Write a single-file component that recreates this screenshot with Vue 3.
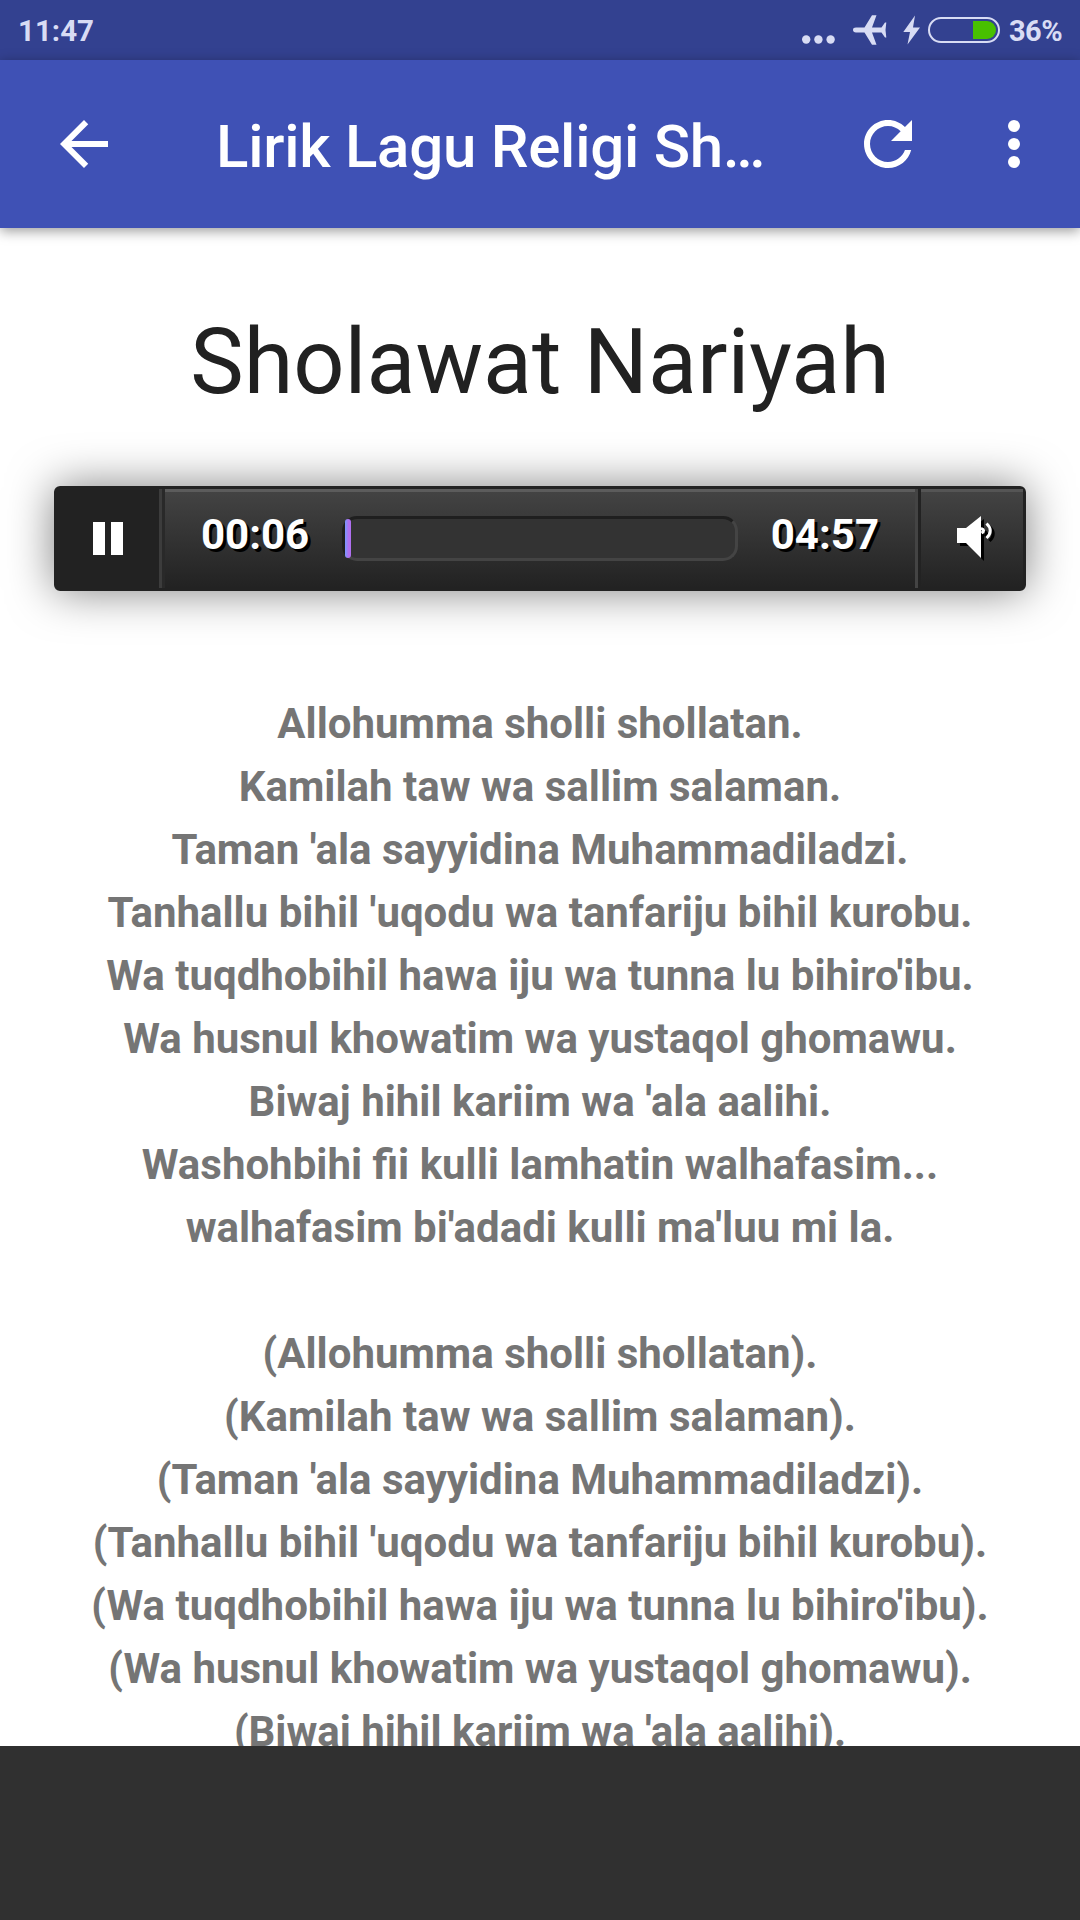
<template>
  <div class="screen">
    <header class="status-bar">
      <span class="clock">11:47</span>
      <div class="status-icons">
        <svg class="dots" width="33" height="9" viewBox="0 0 33 9">
          <circle cx="4.2" cy="4.5" r="4.2" />
          <circle cx="16.4" cy="4.5" r="4.2" />
          <circle cx="28.6" cy="4.5" r="4.2" />
        </svg>
        <svg class="plane" width="34" height="30" viewBox="0 0 34 30">
          <path d="M0 15c0-1.600 1.200-2.400 3-2.400h8.500L19 .3h4.500l-4.500 12.300h9.500L32 7.500h1.300L32.500 15l.8 7.500H32l-3.500-5.100H19l4.500 12.300H19l-7.500-12.300H3c-1.800 0-3-.8-3-2.400z" />
        </svg>
        <svg class="bolt" width="18" height="30" viewBox="0 0 18 30">
          <path d="M12 .5L.3 17H7L4.500 29.500 17 12.500h-7z" />
        </svg>
        <div class="battery">
          <div class="battery-level" :style="{ width: battery + '%' }"></div>
        </div>
        <span class="percent">{{ battery }}%</span>
      </div>
    </header>

    <nav class="toolbar">
      <svg class="icon" viewBox="0 0 24 24">
        <path d="M20 11H7.830l5.590-5.590L12 4l-8 8 8 8 1.410-1.410L7.830 13H20v-2z" />
      </svg>
      <h1 class="toolbar-title">Lirik Lagu Religi Sh…</h1>
      <svg class="icon refresh" viewBox="0 0 24 24">
        <path d="M17.650 6.350C16.200 4.900 14.210 4 12 4c-4.420 0-7.990 3.580-7.990 8s3.570 8 7.990 8c3.730 0 6.840-2.550 7.730-6h-2.080c-.82 2.330-3.040 4-5.650 4-3.310 0-6-2.690-6-6s2.690-6 6-6c1.660 0 3.140.69 4.220 1.780L13 11h7V4l-2.350 2.350z" />
      </svg>
      <svg class="icon more" viewBox="0 0 24 24">
        <circle cx="12" cy="6" r="2" />
        <circle cx="12" cy="12" r="2" />
        <circle cx="12" cy="18" r="2" />
      </svg>
    </nav>

    <main class="content">
      <h2 class="song-title">Sholawat Nariyah</h2>

      <div class="player">
        <div class="player-play">
          <svg width="30" height="33" viewBox="0 0 30 33">
            <path d="M0 0h12v33H0zM18 0h12v33H18z" />
          </svg>
        </div>
        <div class="player-scrubber">
          <span class="time">{{ formatTime(current) }}</span>
          <div class="track">
            <div class="track-fill" :style="{ width: progress + '%' }"></div>
          </div>
          <span class="time">{{ formatTime(duration) }}</span>
        </div>
        <div class="player-volume">
          <svg width="39" height="42" viewBox="0 0 39 42">
            <path d="M0 12h9L24 0v42L9 27H0z" />
            <path class="wave" d="M24 12.500q5 2 .5 4.500M29.500 7.500q7.500 7 0 14.500" />
          </svg>
        </div>
      </div>

      <div class="lyrics">
        <p v-for="(verse, i) in verses" :key="i">
          <span v-for="line in verse" :key="line">{{ line }}</span>
        </p>
      </div>
    </main>

    <footer class="ad-slot"></footer>
  </div>
</template>

<script setup>
import { computed, ref } from 'vue'

const battery = ref(36)
const current = ref(6)
const duration = ref(297)

const progress = computed(() => (current.value / duration.value) * 76.2)

const lines = [
  'Allohumma sholli shollatan.',
  'Kamilah taw wa sallim salaman.',
  "Taman 'ala sayyidina Muhammadiladzi.",
  "Tanhallu bihil 'uqodu wa tanfariju bihil kurobu.",
  "Wa tuqdhobihil hawa iju wa tunna lu bihiro'ibu.",
  'Wa husnul khowatim wa yustaqol ghomawu.',
  "Biwaj hihil kariim wa 'ala aalihi.",
  'Washohbihi fii kulli lamhatin walhafasim...',
  "walhafasim bi'adadi kulli ma'luu mi la."
]

// The second verse repeats the first one in parentheses
const verses = [
  lines,
  lines.slice(0, 7).map(line => '(' + line.slice(0, -1) + ').')
]

function formatTime(seconds) {
  const m = String(Math.floor(seconds / 60)).padStart(2, '0')
  const s = String(seconds % 60).padStart(2, '0')
  return m + ':' + s
}
</script>

<style>
body {
  margin: 0;
  background: #ffffff;
}
</style>

<style scoped>
.screen {
  display: flex;
  flex-direction: column;
  width: 1080px;
  height: 1920px;
  overflow: hidden;
  font-family: Roboto, sans-serif;
  background: #ffffff;
}

.status-bar {
  display: flex;
  align-items: center;
  justify-content: space-between;
  flex: none;
  height: 60px;
  box-sizing: border-box;
  padding: 0 18px;
  background: #334190;
  color: #d8dcf4;
  font-size: 29.5px;
  font-weight: 700;
}

.clock {
  padding-top: 2px;
}

.status-icons {
  display: flex;
  align-items: center;
}

.status-icons svg {
  fill: #d8dcf4;
}

.dots {
  margin: 18px 18px 0 0;
}

.plane {
  margin-right: 16px;
}

.bolt {
  margin-right: 7px;
}

.battery {
  display: flex;
  justify-content: flex-end;
  width: 72px;
  height: 26px;
  box-sizing: border-box;
  padding: 2px;
  border: 2px solid #d8dcf4;
  border-radius: 13px;
  margin-right: 9px;
}

.battery-level {
  background: #48c000;
  border-radius: 0 9px 9px 0;
}

.percent {
  padding-top: 2px;
  font-size: 29px;
  letter-spacing: -0.6px;
}

.toolbar {
  display: flex;
  align-items: center;
  flex: none;
  height: 168px;
  box-sizing: border-box;
  padding: 0 30px 0 48px;
  background: #3f51b5;
  box-shadow: 0 3px 12px rgba(0, 0, 0, 0.4);
  z-index: 1;
}

.icon {
  flex: none;
  width: 72px;
  height: 72px;
  fill: #ffffff;
}

.toolbar-title {
  flex: 1;
  margin: 6px 0 0 96px;
  color: #ffffff;
  font-size: 60px;
  font-weight: 500;
  line-height: 72px;
  letter-spacing: -0.25px;
  white-space: nowrap;
}

.more {
  margin-left: 54px;
}

.content {
  flex: 1;
  min-height: 0;
  overflow: hidden;
  text-align: center;
}

.song-title {
  margin: 75px 0 0;
  color: #212121;
  font-size: 90px;
  font-weight: 400;
  line-height: 120px;
}

.player {
  display: flex;
  height: 105px;
  box-sizing: border-box;
  margin: 63px 54px 0;
  border: 3px solid #222222;
  border-radius: 6px;
  background: linear-gradient(#444444, #222222);
  box-shadow: 0 0 45px rgba(0, 0, 0, 0.5);
}

.player-play {
  display: flex;
  align-items: center;
  justify-content: center;
  width: 102px;
  background: #222222;
}

.player-play svg,
.player-volume svg {
  fill: #ffffff;
}

.player-scrubber {
  display: flex;
  flex: 1;
  align-items: center;
  justify-content: space-between;
  padding: 0 36px 0 39px;
  border-left: 3px solid #3c3c3c;
  border-right: 3px solid #444444;
  box-shadow: inset 3px 0 0 #292929, inset 0 3px 0 #5c5c5c;
}

.time {
  margin-top: -8px;
  color: #ffffff;
  font-size: 42px;
  font-weight: 700;
  text-shadow: 3px 3px 0 #000000;
}

.track {
  width: 396px;
  height: 45px;
  box-sizing: border-box;
  border: 3px solid;
  border-color: #1f1f1f #444444 #444444 #1f1f1f;
  border-radius: 15px;
  background: #333333;
}

.track-fill {
  height: 39px;
  border-radius: 3px;
  background: linear-gradient(to right, #7898ff, #b070f0 60%);
}

.player-volume {
  display: flex;
  align-items: center;
  justify-content: center;
  width: 105px;
  box-sizing: border-box;
  padding: 0 0 3px 12px;
  box-shadow: inset 3px 0 0 #222222, inset 0 3px 0 #555555;
}

.player-volume svg {
  filter: drop-shadow(3px 3px 0 #000000);
}

.player-volume .wave {
  fill: none;
  stroke: #ffffff;
  stroke-width: 3;
}

.lyrics {
  margin-top: 101px;
  color: #757575;
  font-size: 42px;
  font-weight: 700;
  line-height: 63px;
}

.lyrics p {
  margin: 0 0 63px;
}

.lyrics span {
  display: block;
  white-space: nowrap;
}

.ad-slot {
  flex: none;
  height: 174px;
  background: #303030;
}
</style>
